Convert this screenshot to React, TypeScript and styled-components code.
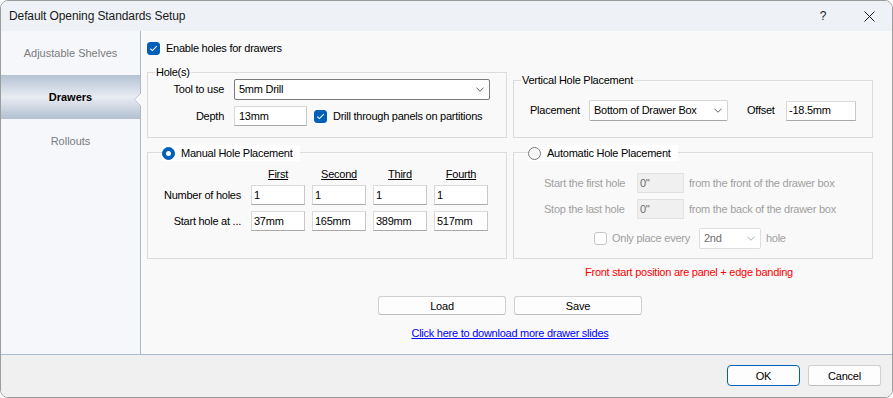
import React from "react";
import styled, { createGlobalStyle, css } from "styled-components";

const Global = createGlobalStyle`
  html, body { margin: 0; padding: 0; background: #ffffff; }
  body { font-family: "Liberation Sans", Arial, sans-serif; }
  *, *::before, *::after { box-sizing: border-box; }
`;

const Window = styled.div`
  width: 893px;
  height: 398px;
  border: 1px solid #9c9c9c;
  border-radius: 8px;
  overflow: hidden;
  display: flex;
  flex-direction: column;
  background: #f9f9f9;
  font-family: "Liberation Sans", Arial, sans-serif;
  font-size: 11px;
  color: #000;
`;

const TitleBar = styled.div`
  height: 30px;
  flex: none;
  display: flex;
  align-items: center;
  padding-left: 8px;
  background: #eef2f7;
`;

const Title = styled.div`
  flex: 1;
  font-size: 12px;
  letter-spacing: -0.1px;
  color: #1a1a1a;
`;

const CaptionButton = styled.div`
  width: 46px;
  height: 30px;
  display: flex;
  align-items: center;
  justify-content: center;
  font-size: 12px;
  color: #1a1a1a;
`;

const Body = styled.div`
  height: 324px;
  flex: none;
  display: flex;
  border-bottom: 1px solid #a9bacb;
`;

const Sidebar = styled.nav`
  width: 140px;
  flex: none;
  display: flex;
  flex-direction: column;
  background: #f5f7fb;
  border-right: 1px solid #a9bacb;
`;

const NavItem = styled.div<{ $active?: boolean }>`
  position: relative;
  height: 44px;
  display: flex;
  align-items: center;
  justify-content: center;
  font-size: 11px;
  color: #7b7b7b;
  ${(p) =>
    p.$active &&
    css`
      color: #000;
      font-weight: bold;
      background: linear-gradient(#b4c2d2 0%, #e8ecf3 50%, #b2c0d0 100%);
    `}
`;

const Notch = styled.svg`
  position: absolute;
  right: -1px;
  top: 18px;
`;

const Main = styled.main`
  flex: 1;
  display: flex;
  flex-direction: column;
  padding: 11px 0 0 6px;
  letter-spacing: -0.25px;
`;

const CheckRow = styled.div<{ $gap?: number; $disabled?: boolean }>`
  display: flex;
  align-items: center;
  gap: ${(p) => p.$gap ?? 6}px;
  height: 13px;
  line-height: 13px;
  white-space: nowrap;
  color: ${(p) => (p.$disabled ? "#a0a0a0" : "#000")};
`;

const CheckBox = styled.span<{ $checked?: boolean; $disabled?: boolean }>`
  width: 13px;
  height: 13px;
  flex: none;
  border-radius: 3px;
  display: inline-flex;
  align-items: center;
  justify-content: center;
  background: ${(p) => (p.$checked ? "#005fb8" : "#ffffff")};
  border: 1px solid
    ${(p) => (p.$checked ? "#005fb8" : p.$disabled ? "#c6c6c6" : "#858585")};
`;

const Radio = styled.span<{ $checked?: boolean }>`
  width: 13px;
  height: 13px;
  flex: none;
  border-radius: 50%;
  display: inline-flex;
  align-items: center;
  justify-content: center;
  background: ${(p) => (p.$checked ? "#005fb8" : "#f7f7f7")};
  border: 1px solid ${(p) => (p.$checked ? "#005fb8" : "#7a7a7a")};
  &::after {
    content: "";
    width: 5px;
    height: 5px;
    border-radius: 50%;
    background: ${(p) => (p.$checked ? "#ffffff" : "transparent")};
  }
`;

const Columns = styled.div`
  display: grid;
  grid-template-columns: 360px 360px;
  column-gap: 6px;
  row-gap: 14px;
  align-items: end;
  margin-top: 17px;
`;

const Group = styled.div<{ $h: number }>`
  position: relative;
  height: ${(p) => p.$h}px;
  border: 1px solid #dcdcdc;
`;

const Legend = styled.div`
  position: absolute;
  top: -7px;
  left: 7px;
  padding: 0 1px;
  line-height: 13px;
  background: #f9f9f9;
  white-space: nowrap;
`;

const RadioLegend = styled.div`
  position: absolute;
  top: -8px;
  left: 14px;
  height: 16px;
  display: flex;
  align-items: center;
  gap: 6px;
  padding-right: 7px;
  background: #ffffff;
  line-height: 13px;
  white-space: nowrap;
`;

const HolesGrid = styled.div`
  display: grid;
  grid-template-columns: 76px 256px;
  column-gap: 10px;
  row-gap: 6px;
  align-items: center;
  padding-top: 6px;
`;

const FieldLabel = styled.span<{ $w?: number; $right?: boolean; $disabled?: boolean }>`
  ${(p) => (p.$w ? `width: ${p.$w}px; flex: none;` : "")}
  text-align: ${(p) => (p.$right ? "right" : "left")};
  line-height: 13px;
  white-space: nowrap;
  color: ${(p) => (p.$disabled ? "#a0a0a0" : "#000")};
`;

const TextBox = styled.div<{ $w?: number; $pad?: number; $disabled?: boolean }>`
  width: ${(p) => (p.$w ? `${p.$w}px` : "auto")};
  height: 20px;
  flex: none;
  display: flex;
  align-items: center;
  padding-left: ${(p) => p.$pad ?? 2}px;
  line-height: 13px;
  white-space: nowrap;
  background: ${(p) => (p.$disabled ? "#f0f0f0" : "#ffffff")};
  border: 1px solid ${(p) => (p.$disabled ? "#e0e0e0" : "#dadada")};
  border-bottom-color: ${(p) => (p.$disabled ? "#e0e0e0" : "#a8a8a8")};
  border-right-color: ${(p) => (p.$disabled ? "#e0e0e0" : "#c8c8c8")};
  color: ${(p) => (p.$disabled ? "#6d6d6d" : "#000")};
`;

const SelectBox = styled.div<{ $w: number; $variant?: "focus" | "normal" | "disabled" }>`
  width: ${(p) => p.$w}px;
  height: 21px;
  flex: none;
  display: flex;
  align-items: center;
  justify-content: space-between;
  padding: 0 5px 0 4px;
  border-radius: 2px;
  line-height: 13px;
  white-space: nowrap;
  background: #ffffff;
  ${(p) =>
    p.$variant === "focus"
      ? css`
          border: 1px solid #7a7a7a;
        `
      : p.$variant === "disabled"
      ? css`
          border: 1px solid #dedede;
          color: #6d6d6d;
        `
      : css`
          border: 1px solid #d4d4d4;
          border-bottom-color: #a6a6a6;
        `}
`;

const InlineRow = styled.div`
  display: flex;
  align-items: center;
  gap: 7px;
`;

const PlacementRow = styled.div`
  display: flex;
  align-items: center;
  padding: 19px 0 0 16px;
`;

const Spacer = styled.span<{ $w: number }>`
  width: ${(p) => p.$w}px;
  flex: none;
`;

const ManualGrid = styled.div`
  display: grid;
  grid-template-columns: 96px repeat(4, 54px);
  grid-template-rows: 11px 20px 20px;
  column-gap: 7px;
  row-gap: 6px;
  align-items: center;
  padding-top: 15px;
`;

const ColHead = styled.span`
  align-self: start;
  height: 11px;
  line-height: 13px;
  text-align: center;
  text-decoration: underline;
  white-space: nowrap;
`;

const RowLabel = styled.span`
  text-align: right;
  padding-right: 3px;
  line-height: 13px;
  white-space: nowrap;
`;

const AutoBody = styled.div`
  padding: 20px 0 0 30px;
  color: #a0a0a0;
`;

const AutoGrid = styled.div`
  display: grid;
  grid-template-columns: 88px 47px auto;
  grid-auto-rows: 20px;
  column-gap: 5px;
  row-gap: 6px;
  align-items: center;
`;

const EveryRow = styled.div`
  display: flex;
  align-items: center;
  height: 21px;
  margin: 9px 0 0 50px;
`;

const NoteRow = styled.div`
  display: grid;
  grid-template-columns: 360px 360px;
  column-gap: 6px;
  margin-top: 7px;
`;

const Note = styled.div`
  grid-column: 2;
  text-align: center;
  padding-right: 8px;
  line-height: 13px;
  color: #ff0000;
`;

const ButtonRow = styled.div`
  width: 726px;
  display: flex;
  justify-content: center;
  gap: 8px;
  margin-top: 17px;
`;

const PushButton = styled.button<{ $w: number; $h: number; $default?: boolean }>`
  width: ${(p) => p.$w}px;
  height: ${(p) => p.$h}px;
  padding: 0;
  font-family: "Liberation Sans", Arial, sans-serif;
  font-size: 11px;
  letter-spacing: -0.2px;
  color: #000;
  background: #fdfdfd;
  border-radius: ${(p) => (p.$default ? 4 : 3)}px;
  border: 1px solid ${(p) => (p.$default ? "#005fb8" : "#d0d0d0")};
  ${(p) => (!p.$default ? "border-bottom-color: #bdbdbd;" : "")}
`;

const LinkRow = styled.div`
  width: 726px;
  text-align: center;
  margin-top: 12px;
  line-height: 13px;
`;

const Link = styled.a`
  color: #0000ff;
  text-decoration: underline;
`;

const Footer = styled.div`
  flex: 1;
  display: flex;
  justify-content: flex-end;
  align-items: flex-start;
  gap: 8px;
  padding: 10px 11px 0 0;
  background: #f0f0f0;
`;

const Chevron = ({ color = "#606060" }: { color?: string }) => (
  <svg width="8" height="5" viewBox="0 0 8 5">
    <path d="M0.5 0.8 L4 4.2 L7.5 0.8" fill="none" stroke={color} strokeWidth="1" />
  </svg>
);

const Tick = () => (
  <svg width="9" height="7" viewBox="0 0 9 7">
    <path d="M1.2 3.6 L3.4 5.6 L7.8 1.2" fill="none" stroke="#ffffff" strokeWidth="1.1" />
  </svg>
);

export default function App() {
  return (
    <>
      <Global />
      <Window>
        <TitleBar>
          <Title>Default Opening Standards Setup</Title>
          <CaptionButton>?</CaptionButton>
          <CaptionButton>
            <svg width="11" height="11" viewBox="0 0 11 11">
              <path d="M0.5 0.5 L10.5 10.5 M10.5 0.5 L0.5 10.5" stroke="#1b1b1b" strokeWidth="1" />
            </svg>
          </CaptionButton>
        </TitleBar>
        <Body>
          <Sidebar>
            <NavItem>Adjustable Shelves</NavItem>
            <NavItem $active>
              Drawers
              <Notch width="7" height="13" viewBox="0 0 7 13">
                <path d="M7 0 L0.6 6.5 L7 13 Z" fill="#f9f9f9" />
                <path d="M7 0 L0.6 6.5 L7 13" fill="none" stroke="#b9c6d4" strokeWidth="1" />
              </Notch>
            </NavItem>
            <NavItem>Rollouts</NavItem>
          </Sidebar>
          <Main>
            <CheckRow>
              <CheckBox $checked>
                <Tick />
              </CheckBox>
              Enable holes for drawers
            </CheckRow>
            <Columns>
              <Group $h={66}>
                <Legend>Hole(s)</Legend>
                <HolesGrid>
                  <FieldLabel $right>Tool to use</FieldLabel>
                  <SelectBox $w={256} $variant="focus">
                    <span>5mm Drill</span>
                    <Chevron />
                  </SelectBox>
                  <FieldLabel $right>Depth</FieldLabel>
                  <InlineRow>
                    <TextBox $w={73} $pad={4}>13mm</TextBox>
                    <CheckRow>
                      <CheckBox $checked>
                        <Tick />
                      </CheckBox>
                      Drill through panels on partitions
                    </CheckRow>
                  </InlineRow>
                </HolesGrid>
              </Group>
              <Group $h={58}>
                <Legend>Vertical Hole Placement</Legend>
                <PlacementRow>
                  <FieldLabel $w={49}>Placement</FieldLabel>
                  <Spacer $w={10} />
                  <SelectBox $w={139}>
                    <span>Bottom of Drawer Box</span>
                    <Chevron />
                  </SelectBox>
                  <Spacer $w={19} />
                  <FieldLabel $w={29}>Offset</FieldLabel>
                  <Spacer $w={10} />
                  <TextBox $w={70}>-18.5mm</TextBox>
                </PlacementRow>
              </Group>
              <Group $h={107}>
                <RadioLegend>
                  <Radio $checked />
                  Manual Hole Placement
                </RadioLegend>
                <ManualGrid>
                  <span />
                  <ColHead>First</ColHead>
                  <ColHead>Second</ColHead>
                  <ColHead>Third</ColHead>
                  <ColHead>Fourth</ColHead>
                  <RowLabel>Number of holes</RowLabel>
                  <TextBox>1</TextBox>
                  <TextBox>1</TextBox>
                  <TextBox>1</TextBox>
                  <TextBox>1</TextBox>
                  <RowLabel>Start hole at ...</RowLabel>
                  <TextBox>37mm</TextBox>
                  <TextBox>165mm</TextBox>
                  <TextBox>389mm</TextBox>
                  <TextBox>517mm</TextBox>
                </ManualGrid>
              </Group>
              <Group $h={107}>
                <RadioLegend>
                  <Radio />
                  Automatic Hole Placement
                </RadioLegend>
                <AutoBody>
                  <AutoGrid>
                    <FieldLabel $disabled>Start the first hole</FieldLabel>
                    <TextBox $disabled>0''</TextBox>
                    <FieldLabel $disabled>from the front of the drawer box</FieldLabel>
                    <FieldLabel $disabled>Stop the last hole</FieldLabel>
                    <TextBox $disabled>0''</TextBox>
                    <FieldLabel $disabled>from the back of the drawer box</FieldLabel>
                  </AutoGrid>
                  <EveryRow>
                    <CheckRow $gap={5} $disabled>
                      <CheckBox $disabled />
                      Only place every
                    </CheckRow>
                    <Spacer $w={9} />
                    <SelectBox $w={62} $variant="disabled">
                      <span>2nd</span>
                      <Chevron color="#b0b0b0" />
                    </SelectBox>
                    <Spacer $w={5} />
                    <FieldLabel $disabled>hole</FieldLabel>
                  </EveryRow>
                </AutoBody>
              </Group>
            </Columns>
            <NoteRow>
              <Note>Front start position are panel + edge banding</Note>
            </NoteRow>
            <ButtonRow>
              <PushButton $w={128} $h={19}>Load</PushButton>
              <PushButton $w={128} $h={19}>Save</PushButton>
            </ButtonRow>
            <LinkRow>
              <Link>Click here to download more drawer slides</Link>
            </LinkRow>
          </Main>
        </Body>
        <Footer>
          <PushButton $w={73} $h={21} $default>OK</PushButton>
          <PushButton $w={73} $h={21}>Cancel</PushButton>
        </Footer>
      </Window>
    </>
  );
}
